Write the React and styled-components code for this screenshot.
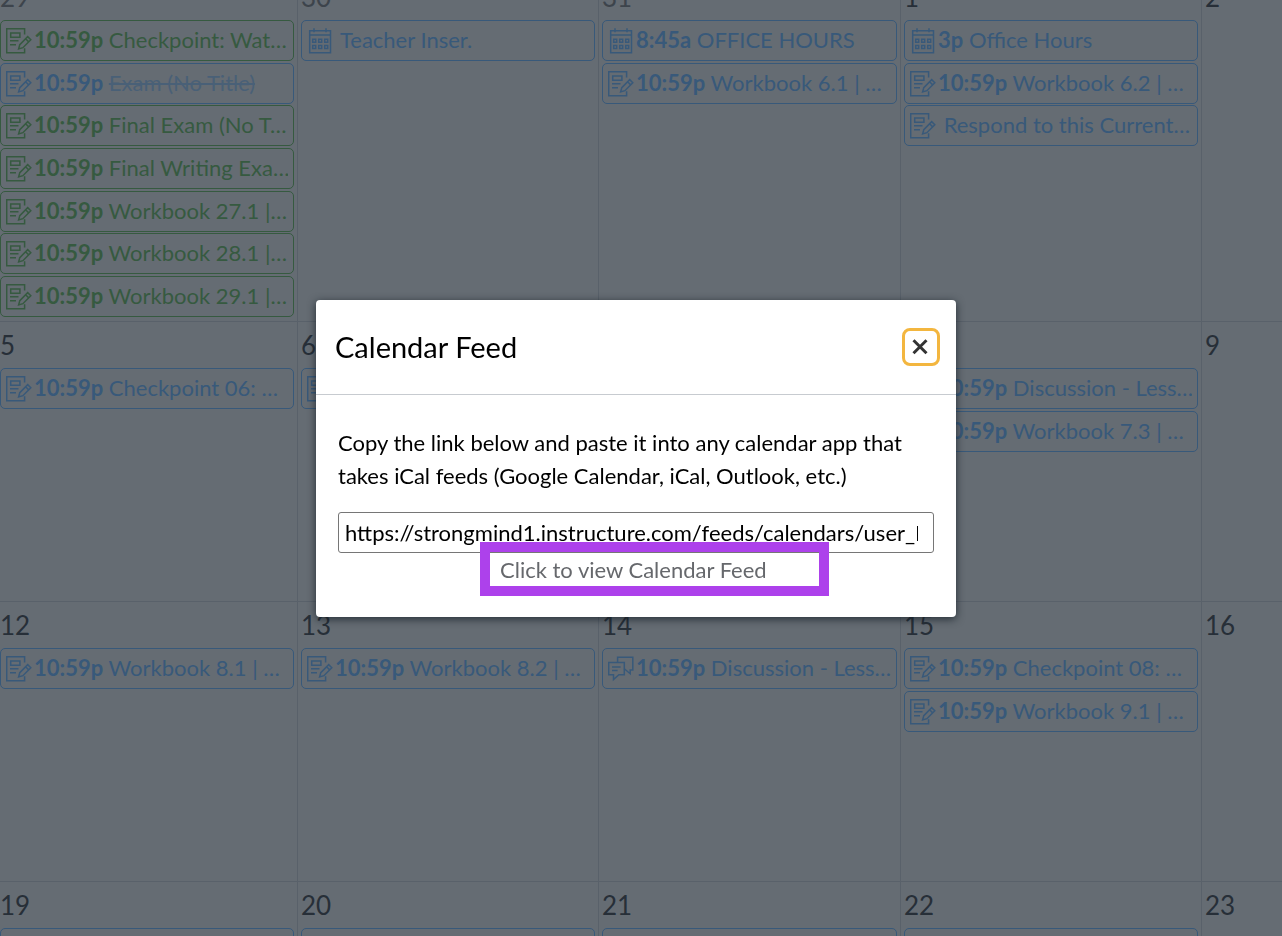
import React from "react";
import styled, { createGlobalStyle } from "styled-components";

const GlobalStyle = createGlobalStyle`
  * {
    box-sizing: border-box;
  }
  body {
    margin: 0;
    height: 100vh;
    overflow: hidden;
    background: #656c73;
    font-family: Lato, "Liberation Sans", sans-serif;
  }
`;

const Calendar = styled.main`
  height: 100vh;
  overflow: hidden;
`;

const Weeks = styled.div`
  margin-top: -26px;
`;

const Week = styled.div`
  display: grid;
  grid-template-columns: 298fr 301fr 302fr 301fr 80fr;
  min-height: 280px;
  border-bottom: 1px solid #59616a;
`;

const Day = styled.div`
  min-width: 0;
  padding: 0 3px 2px;
  border-right: 1px solid #59616a;
  &:first-child {
    padding-left: 0;
  }
  &:last-child {
    border-right: 0;
  }
`;

const DayNumber = styled.div`
  height: 46px;
  font-size: 26px;
  line-height: 46px;
  color: ${({ $muted }) => ($muted ? "#3d444c" : "#272f38")};
`;

const EventLink = styled.a`
  display: flex;
  align-items: center;
  gap: 2px;
  height: 41px;
  margin-bottom: 2px;
  padding: 0 5px;
  border: 1px solid currentColor;
  border-radius: 5px;
  color: ${({ $green }) => ($green ? "#365a40" : "#38597a")};
  text-decoration: none;
  &:nth-of-type(3n + 2) {
    margin-bottom: 1px;
  }
`;

const EventIcon = styled.svg`
  flex: none;
  width: 26px;
  height: 26px;
  fill: none;
  stroke: currentColor;
  stroke-width: 1.5;
`;

const EventText = styled.span`
  overflow: hidden;
  padding-bottom: 1px;
  font-size: 22px;
  line-height: 28px;
  white-space: pre;
`;

const Struck = styled.s`
  opacity: 0.6;
`;

const Backdrop = styled.div`
  position: fixed;
  inset: 0;
  display: flex;
  justify-content: center;
  align-items: flex-start;
  padding: 300px 10px 0 0;
`;

const Dialog = styled.section`
  width: 640px;
  max-width: 100%;
  background: #fff;
  border-radius: 4px;
  box-shadow: 0 2px 8px rgba(20, 30, 38, 0.8);
  color: #000;
`;

const DialogHeader = styled.header`
  display: flex;
  align-items: center;
  justify-content: space-between;
  height: 95px;
  padding: 0 16px 0 19px;
  border-bottom: 1px solid #c7cbd0;
`;

const DialogTitle = styled.h2`
  margin: 0;
  font-size: 29px;
  font-weight: 400;
  line-height: 34px;
`;

const CloseButton = styled.button`
  display: flex;
  align-items: center;
  justify-content: center;
  width: 38px;
  height: 38px;
  padding: 0;
  background: #fff;
  border: 3px solid #f3b63f;
  border-radius: 8px;
  cursor: pointer;
`;

const DialogBody = styled.div`
  display: flex;
  flex-direction: column;
  padding: 31px 22px 64px;
  font-size: 22px;
`;

const Instructions = styled.label`
  line-height: 33px;
`;

const FeedField = styled.div`
  position: relative;
  margin-top: 20px;
`;

const FeedInput = styled.input`
  display: block;
  width: 100%;
  height: 41px;
  padding: 0 15px 0 6px;
  border: 1px solid #767676;
  border-radius: 3px;
  color: #000;
  font: inherit;
`;

const Highlight = styled.div`
  position: absolute;
  top: 30px;
  left: 142px;
  width: 349px;
  height: 54px;
  padding-left: 10px;
  border: 10px solid #ad41eb;
`;

const FeedLink = styled.a`
  color: #66686c;
  line-height: 36px;
  text-decoration: none;
`;

const AssignmentIcon = () => (
  <EventIcon viewBox="0 0 26 26" aria-hidden="true">
    <path d="M18.6 6.5V.7H.7v24h17.9v-4.5" />
    <path d="M4.7 5h9.2v4.3H4.7zM4 12.8h8.5M4 16.8h6" />
    <path d="M12.6 21l1.2-4.4 7.9-8 3.1 3.1-7.9 8zM19.6 10.8l3.1 3.1" />
  </EventIcon>
);

const CalendarIcon = () => (
  <EventIcon viewBox="0 0 26 26" aria-hidden="true">
    <path d="M2.7 2.7h20.8v22H2.7zM2.7 7h20.8M7 .3v4M19 .3v4" />
    <path d="M5.7 11.2h3v3h-3zM11.7 11.2h3v3h-3zM17.7 11.2h3v3h-3zM5.7 17.5h3v3h-3zM11.7 17.5h3v3h-3zM17.7 17.5h3v3h-3z" />
  </EventIcon>
);

const DiscussionIcon = () => (
  <EventIcon viewBox="0 0 26 26" aria-hidden="true">
    <path d="M.7 6.6h15.6v12.1h-5.4l-5.4 4.8v-4.8H.7z" />
    <path d="M9.6 6.6V1.2h15.2v12.9h-2.6v3.6l-5.9-5M4 11h8.6M4 14.5h5.6" />
  </EventIcon>
);

const icons = {
  assignment: AssignmentIcon,
  calendar: CalendarIcon,
  discussion: DiscussionIcon,
};

const work = (title, extra) => ({ time: "10:59p", title, ...extra });

const weeks = [
  [
    {
      day: 29,
      muted: true,
      events: [
        work("Checkpoint: Wat…", { green: true }),
        work("Exam (No Title)", { done: true }),
        work("Final Exam (No T…", { green: true }),
        work("Final Writing Exa…", { green: true }),
        work("Workbook 27.1 |…", { green: true }),
        work("Workbook 28.1 |…", { green: true }),
        work("Workbook 29.1 |…", { green: true }),
      ],
    },
    {
      day: 30,
      muted: true,
      events: [{ title: "Teacher Inser.", icon: "calendar" }],
    },
    {
      day: 31,
      muted: true,
      events: [
        { time: "8:45a", title: "OFFICE HOURS", icon: "calendar" },
        work("Workbook 6.1 | …"),
      ],
    },
    {
      day: 1,
      events: [
        { time: "3p", title: "Office Hours", icon: "calendar" },
        work("Workbook 6.2 | …"),
        { title: "Respond to this Current…" },
      ],
    },
    { day: 2, events: [] },
  ],
  [
    { day: 5, events: [work("Checkpoint 06: …")] },
    { day: 6, events: [work("")] },
    { day: 7, events: [] },
    {
      day: 8,
      events: [
        work("Discussion - Less…", { icon: "discussion" }),
        work("Workbook 7.3 | …"),
      ],
    },
    { day: 9, events: [] },
  ],
  [
    { day: 12, events: [work("Workbook 8.1 | …")] },
    { day: 13, events: [work("Workbook 8.2 | …")] },
    { day: 14, events: [work("Discussion - Less…", { icon: "discussion" })] },
    { day: 15, events: [work("Checkpoint 08: …"), work("Workbook 9.1 | …")] },
    { day: 16, events: [] },
  ],
  [
    { day: 19, events: [work("")] },
    { day: 20, events: [work("")] },
    { day: 21, events: [work("")] },
    { day: 22, events: [work("")] },
    { day: 23, events: [] },
  ],
];

const CalendarEvent = ({ time, title, icon = "assignment", green, done }) => {
  const Icon = icons[icon];
  return (
    <EventLink href="#event" $green={green}>
      <Icon />
      <EventText>
        <b>{time}</b> {done ? <Struck>{title}</Struck> : title}
      </EventText>
    </EventLink>
  );
};

const FeedDialog = () => (
  <Backdrop>
    <Dialog role="dialog" aria-labelledby="feed-title">
      <DialogHeader>
        <DialogTitle id="feed-title">Calendar Feed</DialogTitle>
        <CloseButton aria-label="Close">
          <svg width="18" height="18" viewBox="0 0 18 18">
            <path d="M1.5 2.2l13 13M14.5 2.2l-13 13" stroke="#333" strokeWidth="3" />
          </svg>
        </CloseButton>
      </DialogHeader>
      <DialogBody>
        <Instructions htmlFor="feed-url">
          Copy the link below and paste it into any calendar app that takes iCal
          feeds (Google Calendar, iCal, Outlook, etc.)
        </Instructions>
        <FeedField>
          <FeedInput
            id="feed-url"
            readOnly
            value="https://strongmind1.instructure.com/feeds/calendars/user_L"
          />
          <Highlight>
            <FeedLink href="#feed">Click to view Calendar Feed</FeedLink>
          </Highlight>
        </FeedField>
      </DialogBody>
    </Dialog>
  </Backdrop>
);

const App = () => (
  <>
    <GlobalStyle />
    <Calendar>
      <Weeks>
        {weeks.map((week) => (
          <Week key={week[0].day}>
            {week.map(({ day, muted, events }) => (
              <Day key={day}>
                <DayNumber $muted={muted}>{day}</DayNumber>
                {events.map((event, i) => (
                  <CalendarEvent key={i} {...event} />
                ))}
              </Day>
            ))}
          </Week>
        ))}
      </Weeks>
    </Calendar>
    <FeedDialog />
  </>
);

export default App;
